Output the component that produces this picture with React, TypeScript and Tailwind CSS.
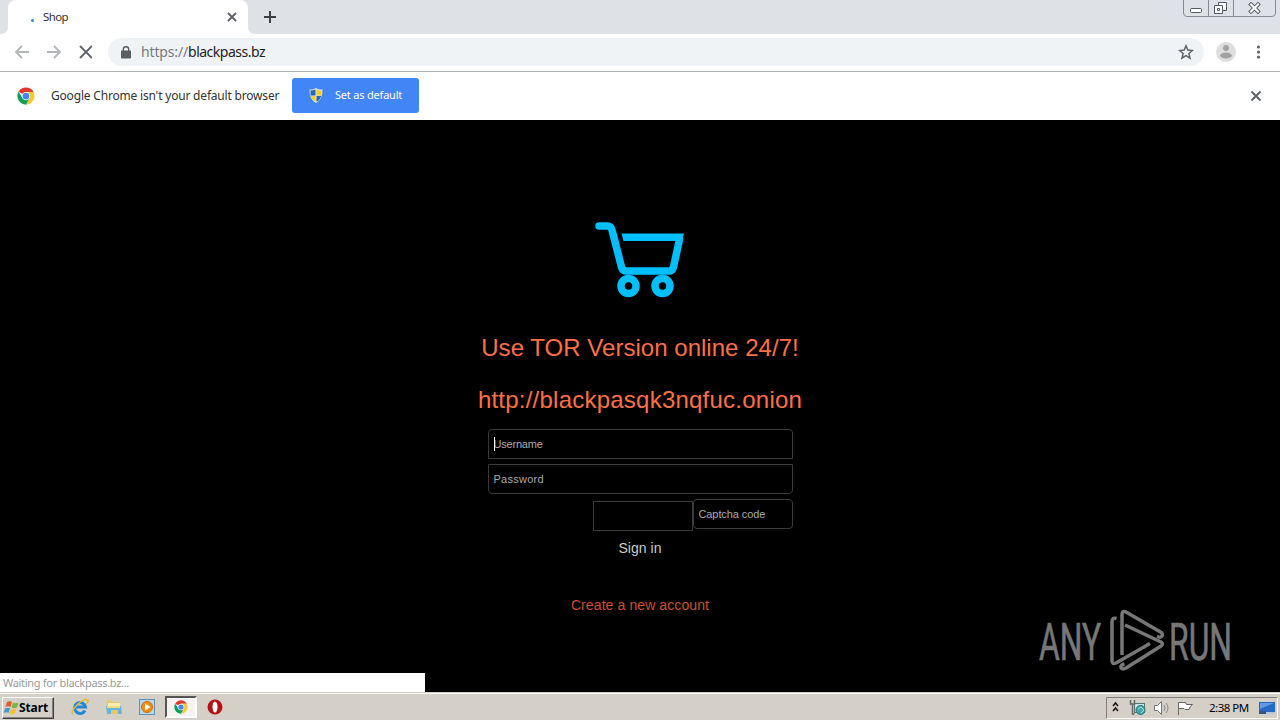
import { useState } from 'react';

const ChromeLogo = ({ className }: { className: string }) => (
    <svg viewBox="0 0 48 48" className={className}>
        <circle cx="24" cy="24" r="23" fill="#fff" />
        <path d="M24 24 4.1 12.5A23 23 0 0 1 43.9 12.5L44 13H24z" fill="#db3a2c" />
        <path d="M24 13h19.9A23 23 0 0 1 24 47l9.5-17.5z" fill="#fdc92f" />
        <path d="M4.1 12.5A23 23 0 0 0 24 47l9.5-17.5L24 34l-9.5-4.5z" fill="#0f9d58" />
        <circle cx="24" cy="24" r="11" fill="#fff" />
        <circle cx="24" cy="24" r="9" fill="#4285f4" />
    </svg>
);

const WindowButtons = () => (
    <svg className="ml-auto mr-[3px] h-[18px] w-[94px]" viewBox="0 0 94 18" fill="none">
        <path d="M.5 0v13q0 3.500 3.500 3.500h85q3.500 0 3.500-3.500V0M25.500 0v16M50.500 0v16" stroke="#858990" />
        <rect x="7.500" y="8.500" width="11" height="4" rx="1" fill="#fff" stroke="#555961" />
        <path d="M35.500 2.500h8v8h-8z" fill="#fff" stroke="#555961" />
        <path d="M31.500 5.500h8v8h-8z" fill="#fff" stroke="#555961" />
        <path d="M34.500 8.500h2v2h-2z" stroke="#555961" />
        <path d="m68 4.500 7 7m0-7-7 7" stroke="#555961" strokeWidth="4" strokeLinecap="square" />
        <path d="m68 4.500 7 7m0-7-7 7" stroke="#fff" strokeWidth="2.200" strokeLinecap="square" />
    </svg>
);

const TabStrip = () => (
    <div className="flex h-[34px] bg-[#dee1e6]">
        <svg className="h-[34px] w-2 shrink-0" viewBox="0 0 8 34">
            <path d="M8 26v8H0q8 0 8-8z" fill="#fff" />
        </svg>
        <div className="flex w-[240px] items-center rounded-t-lg bg-white">
            <span className="ml-[23px] mt-[6px] h-[3px] w-[3px] rounded-full bg-[#3a8ad8]" />
            <span className="ml-[9px] text-[11.500px] tracking-[-0.6px] text-[#333]">Shop</span>
            <svg className="ml-auto mr-[11px] h-[10px] w-[10px]" viewBox="0 0 10 10">
                <path d="m1 1 8 8m0-8-8 8" stroke="#5f6368" strokeWidth="1.900" />
            </svg>
        </div>
        <svg className="h-[34px] w-2 shrink-0" viewBox="0 0 8 34">
            <path d="M0 26v8h8q-8 0-8-8z" fill="#fff" />
        </svg>
        <svg className="ml-2 mt-[11px] h-3 w-3" viewBox="0 0 12 12">
            <path d="M6 0v12M0 6h12" stroke="#3c4043" strokeWidth="2" />
        </svg>
        <WindowButtons />
    </div>
);

const Toolbar = () => (
    <div className="flex h-[38px] items-center border-b border-[#b0b3b3] bg-white pb-px">
        <svg className="ml-[14px] h-4 w-[78px] shrink-0" viewBox="0 0 78 16" fill="none" strokeWidth="1.900">
            <path d="M15 8H2m6-6L2 8l6 6" stroke="#b5b7ba" />
            <path d="M33 8h13m-6-6 6 6-6 6" stroke="#b5b7ba" />
            <path d="m66 2 12 12M78 2 66 14" stroke="#5f6368" />
        </svg>
        <div className="ml-4 flex h-7 w-[1096px] items-center rounded-full bg-[#f0f3f5]">
            <svg className="ml-[13px] h-[13px] w-[10px]" viewBox="0 0 10 13">
                <rect x="0" y="4.500" width="10" height="8" rx="1" fill="#5a5e63" />
                <path d="M2.300 5V3.500a2.700 2.700 0 0 1 5.400 0V5" fill="none" stroke="#5a5e63" strokeWidth="1.400" />
            </svg>
            <span className="mb-px ml-[10px] text-[14px] text-[#777b80]">
                <span className="tracking-[-0.15px]">https://</span>
                <span className="tracking-[-0.5px] text-[#222]">blackpass.bz</span>
            </span>
            <svg className="ml-auto mr-[10px] h-4 w-4" viewBox="0 0 16 16">
                <path d="m8 1.800 1.800 4.300 4.600.4-3.500 3 1.100 4.600L8 11.600l-4 2.500 1.100-4.600-3.500-3 4.600-.4z" fill="none" stroke="#5f6368" strokeWidth="1.500" />
            </svg>
        </div>
        <svg className="ml-3 h-5 w-5" viewBox="0 0 20 20">
            <circle cx="10" cy="10" r="10" fill="#dedede" />
            <circle cx="10" cy="6" r="3" fill="#a2a2a2" />
            <ellipse cx="10" cy="13.500" rx="5.800" ry="3" fill="#a2a2a2" />
        </svg>
        <svg className="ml-5 h-4 w-[5px]" viewBox="0 0 5 16" fill="#5f6368">
            <circle cx="2.500" cy="3" r="1.600" />
            <circle cx="2.500" cy="8" r="1.600" />
            <circle cx="2.500" cy="13" r="1.600" />
        </svg>
    </div>
);

const InfoBar = () => (
    <div className="flex h-12 items-center bg-white">
        <ChromeLogo className="ml-[17px] h-[18px] w-[18px]" />
        <span className="ml-4 w-[241px] whitespace-nowrap text-[12px] tracking-[-0.19px] text-[#333]">Google Chrome isn't your default browser</span>
        <button className="mt-[-1px] flex h-[35px] w-[127px] items-center rounded-[3px] bg-[#4285f4]">
            <svg className="ml-[17px] h-[15px] w-[14px]" viewBox="0 0 14 15">
                <path d="M7 0q3 2 6.500 1.500Q14 11 7 15 0 11 .5 1.500 4 2 7 0z" fill="#dfe7ee" />
                <path d="M6.500 1.500v6h-5v-5q3 0 5-1zM7.500 8h4.700q-1 4-4.700 5.700z" fill="#2865b8" />
                <path d="M7.500 1.500v6h5v-5q-3 0-5-1zM6.500 8H1.800q1 4 4.700 5.700z" fill="#f2d023" />
            </svg>
            <span className="ml-3 whitespace-nowrap text-[11px] tracking-[-0.2px] text-white">Set as default</span>
        </button>
        <svg className="ml-auto mr-[19px] h-[10px] w-[10px]" viewBox="0 0 10 10">
            <path d="m.5.5 9 9m0-9-9 9" stroke="#5f6368" strokeWidth="2" />
        </svg>
    </div>
);

const CartIcon = () => (
    <svg className="h-20 w-[92px]" viewBox="0 0 92 80" fill="none" stroke="#00bfff">
        <path d="M5 6h8.500q3.500 0 4.500 4l9.500 37q1 4 5 4H75q3.500 0 4.500-4l6-27.500" strokeWidth="7.500" strokeLinecap="round" strokeLinejoin="round" />
        <path d="M27.500 13.500h62.500L88 21H29.500z" fill="#00bfff" stroke="none" />
        <circle cx="34.500" cy="66" r="7.500" strokeWidth="7.500" />
        <circle cx="68.500" cy="66" r="7.500" strokeWidth="7.500" />
    </svg>
);

const AnyRunLogo = () => (
    <svg className="absolute left-[1036px] top-[488px] h-[70px] w-[244px]" viewBox="0 0 244 70" fill="#777">
        <g fontFamily="Roboto, sans-serif" fontSize="52" stroke="#777" strokeWidth=".7">
            <text x="3" y="52" textLength="62" lengthAdjust="spacingAndGlyphs">ANY</text>
            <text x="133" y="52" textLength="63" lengthAdjust="spacingAndGlyphs">RUN</text>
        </g>
        <g fill="none" stroke="#777" strokeWidth="3.500" strokeLinejoin="round">
            <path d="M80.500 10.500Q76 9 76 14v38.500q0 4.500 4 2.500l34-19.500" />
            <path d="M86 47V7q0-5 4-3l34.500 20q3 2 1.500 4t-5 .5" />
            <path d="M89 17l36 17q3 2 0 4L90 60q-4 2-5-.5t3.500-3.500" />
        </g>
    </svg>
);

const LoginPage = () => {
    const [username, setUsername] = useState('');
    const [password, setPassword] = useState('');
    const [captcha, setCaptcha] = useState('');

    return (
        <div className="relative flex h-[572px] flex-col items-center bg-black pt-[100px] font-['Liberation_Sans',Arial,sans-serif]">
            <CartIcon />
            <h3 className="mt-[30px] whitespace-nowrap text-[24px] leading-9 tracking-[0.03px] text-[#ff7046]">Use TOR Version online 24/7!</h3>
            <h3 className="mt-4 whitespace-nowrap text-[24px] leading-9 tracking-[0.23px] text-[#ff7046]">http://blackpasqk3nqfuc.onion</h3>
            <form className="mt-[11px] flex w-[305px] flex-col items-center text-[11px]" onSubmit={(e) => e.preventDefault()}>
                <div className="relative h-[30px] w-full">
                    <input
                        className="h-[30px] w-full rounded-t border border-[#3a3a3a] px-[5px] tracking-[-0.2px] outline-none text-[#aaa] placeholder:text-[#aaa]"
                        type="text"
                        placeholder="Username"
                        value={username}
                        onChange={(e) => setUsername(e.target.value)}
                    />
                    <span className="absolute left-[6px] top-2 h-[14px] w-px bg-white" />
                </div>
                <input
                    className="mt-[5px] h-[30px] w-full rounded-b border border-[#3a3a3a] px-[5px] tracking-[0.25px] outline-none text-[#aaa] placeholder:text-[#aaa]"
                    type="password"
                    placeholder="Password"
                    value={password}
                    onChange={(e) => setPassword(e.target.value)}
                />
                <div className="mt-[5px] flex w-full justify-end">
                    <div className="mt-[2px] h-[30px] w-[100px] border border-[#3a3a3a]" />
                    <input
                        className="h-[30px] w-[100px] rounded border border-[#3a3a3a] px-[5px] tracking-[-0.1px] outline-none text-[#aaa] placeholder:text-[#aaa]"
                        type="text"
                        placeholder="Captcha code"
                        value={captcha}
                        onChange={(e) => setCaptcha(e.target.value)}
                    />
                </div>
                <button className="mt-[7px] text-[14px] leading-5 tracking-[0.05px] text-[#ccc]">Sign in</button>
            </form>
            <a className="mt-[37px] text-[14px] leading-5 tracking-[0.1px] text-[#cd4f30]">Create a new account</a>
            <AnyRunLogo />
            <div className="absolute bottom-0 left-0 flex h-[19px] w-[425px] items-center bg-white pl-[3px] font-['Noto_Sans',sans-serif] text-[11px] tracking-[-0.3px] text-[#999]">
                <span className="mt-[2px]">Waiting for blackpass.bz...</span>
            </div>
        </div>
    );
};

const TaskIcons = () => (
    <div className="ml-[17px] flex items-center">
        <svg className="h-[18px] w-[18px]" viewBox="0 0 18 18" fill="none">
            <path d="M14 12.500A5.500 5.500 0 1 1 14.500 9H5" stroke="#2288d8" strokeWidth="3" />
            <path d="M2 16Q-1 14 6 7t11-5q1 1-1.500 4" stroke="#e8b933" strokeWidth="1.500" />
        </svg>
        <svg className="ml-4 h-[18px] w-[18px]" viewBox="0 0 18 18">
            <path d="M2 2h5l1 2h7v12H2z" fill="#e8c76b" />
            <path d="M3 5h12v7H3z" fill="#fff0ae" />
            <path d="M1 8h15l1 8h-4v-4H6v4H2z" fill="#65b4dd" />
            <path d="M2 8h13v2H2z" fill="#f5da7d" />
        </svg>
        <svg className="ml-4 h-4 w-4" viewBox="0 0 16 16">
            <rect x=".5" y=".5" width="15" height="15" fill="#b6d8ef" stroke="#5d92bd" />
            <circle cx="8" cy="8" r="5.500" fill="#f58b16" stroke="#d66b08" />
            <path d="m6 4.500 5.500 3.500L6 11.500z" fill="#fff" />
        </svg>
        <div className="ml-[10px] flex h-[22px] w-8 items-center justify-center border-2 border-b-white border-l-[#555] border-r-white border-t-[#555] bg-[#f4f3f1]">
            <ChromeLogo className="h-[14px] w-[14px]" />
        </div>
        <svg className="ml-[10px] h-4 w-4" viewBox="0 0 16 16">
            <circle cx="8" cy="8" r="7.500" fill="#b51218" />
            <ellipse cx="8" cy="8" rx="2.500" ry="5.500" fill="#fff" />
        </svg>
    </div>
);

const Taskbar = () => (
    <div className="flex h-7 items-center border-t border-[#d4d0c8] bg-[#d4d0c8] shadow-[inset_0_1px_0_#fff]">
        <button className="ml-[2px] mt-[2px] flex h-[22px] w-[52px] items-center border border-b-[#404040] border-l-white border-r-[#404040] border-t-white bg-[#d4d0c8] shadow-[inset_-1px_-1px_0_#808080]">
            <svg className="h-4 w-4 shrink-0" viewBox="0 0 16 16">
                <path d="M4 2q3-1.500 5 0L7.500 7q-2-1.500-5 0z" fill="#e6592b" />
                <path d="M10 2.500q2 1.500 5.500 0L14 7.500q-3 1.500-5.500 0z" fill="#79b943" />
                <path d="M2 8.500q3-1.500 5 0L5.500 13q-2-1.500-5 0z" fill="#4597d5" />
                <path d="M8 8.800q2 1.500 5.500 0L12 13.500q-3 1.500-5.500 0z" fill="#f3c42d" />
            </svg>
            <span className="text-[12px] font-bold tracking-[-0.1px]">Start</span>
        </button>
        <TaskIcons />
        <div className="ml-auto mr-[2px] mt-[2px] flex h-[22px] w-[172px] items-center border border-b-white border-l-[#808080] border-r-white border-t-[#808080]">
            <svg className="h-5 w-[92px] shrink-0" viewBox="0 0 92 20" fill="none">
                <path d="m6 8 2.500-3L11 8m-5 5 2.500-3 2.500 3" stroke="#111" strokeWidth="1.500" />
                <rect x="27.500" y="5.500" width="10" height="9" fill="#cce3e5" stroke="#50777b" />
                <circle cx="33.500" cy="12" r="4.500" fill="#45a7a6" stroke="#23767d" />
                <path d="m31 11 3-2 3 3-3 3" stroke="#a6e2d3" />
                <path d="M23.500 2v4h4V2m-2 4v10h2" stroke="#666" strokeWidth="1.500" />
                <path d="M47.500 7.500h3l4-4v13l-4-4h-3z" fill="#fff" stroke="#777" />
                <path d="M57 7q2 3 0 6m2-8q4 5 0 10" stroke="#888" />
                <path d="M71.500 17V4.500h7l1 2h6q-3 2-3.500 5h-4l-1-1h-5" fill="#fff" stroke="#666" />
            </svg>
            <span className="ml-[10px] whitespace-nowrap text-[11.500px] tracking-[-0.5px] text-black">2:38 PM</span>
            <svg className="ml-auto mr-[2px] h-[14px] w-4" viewBox="0 0 16 14">
                <path d="M0 1h16v10H0z" fill="#2669c4" />
                <path d="M1 2h14L1 8z" fill="#609be1" />
                <path d="M0 11h16v2H0z" fill="#b7c6d4" />
                <path d="M0 10h7v3H0z" fill="#39577e" />
            </svg>
        </div>
    </div>
);

const App = () => {
    return (
        <div className="h-[720px] w-[1280px] overflow-hidden bg-black font-['Noto_Sans',sans-serif]">
            <TabStrip />
            <Toolbar />
            <InfoBar />
            <LoginPage />
            <Taskbar />
        </div>
    );
};

export default App;
